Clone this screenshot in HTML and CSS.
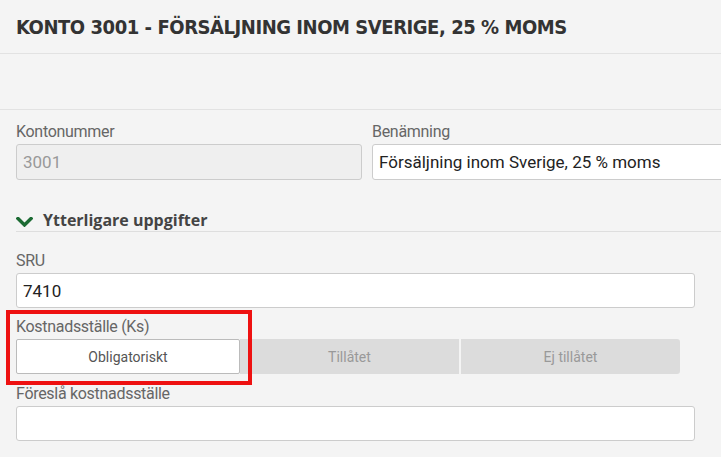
FILE: index.html
```html
<!DOCTYPE html>
<html lang="sv">
<head>
    <meta charset="UTF-8">
    <meta name="viewport" content="width=device-width, initial-scale=1.0">
    <title>Konto 3001</title>
    <link rel="stylesheet" href="styles.css">
</head>
<body>
    <div id="header">
        <h1>KONTO 3001 - FÖRSÄLJNING INOM SVERIGE, 25 % MOMS</h1>
    </div>
    <div id="toolbar"></div>
    <div id="form">
        <div class="row">
            <div class="field field-small">
                <label>Kontonummer</label>
                <input type="text" value="3001" disabled>
            </div>
            <div class="field field-wide">
                <label>Benämning</label>
                <input type="text" value="Försäljning inom Sverige, 25 % moms">
            </div>
        </div>
        <div class="section-title">
            <svg class="chevron" width="17" height="10" viewBox="0 0 17 10">
                <path d="M2 1.5 L8.5 8 L15 1.5" fill="none" stroke="#1c6b33" stroke-width="3.4" stroke-linecap="square"/>
            </svg>
            <span>Ytterligare uppgifter</span>
        </div>
        <div class="field field-sru">
            <label>SRU</label>
            <input type="text" value="7410" class="wide-input">
        </div>
        <div class="field field-ks">
            <label>Kostnadsställe (Ks)</label>
            <div class="segments">
                <button class="segment selected">Obligatoriskt</button>
                <button class="segment middle">Tillåtet</button>
                <button class="segment last">Ej tillåtet</button>
            </div>
            <div class="highlight"></div>
        </div>
        <div class="field field-suggest">
            <label>Föreslå kostnadsställe</label>
            <input type="text" value="" class="wide-input">
        </div>
    </div>
</body>
</html>
```

FILE: styles.css
```css
body {
    margin: 0;
    padding: 0;
    background-color: #f4f4f4;
    font-family: 'Roboto', sans-serif;
    overflow: hidden;
}
#header {
    height: 53px;
    border-bottom: 1px solid #e2e2e2;
    padding: 0 16px;
    display: flex;
    align-items: center;
}
#header h1 {
    margin: 0;
    font-family: 'DejaVu Sans Condensed', 'DejaVu Sans', sans-serif;
    font-weight: bold;
    font-size: 20px;
    color: #333;
    letter-spacing: -0.45px;
    white-space: nowrap;
}
#toolbar {
    height: 55px;
    border-bottom: 1px solid #e2e2e2;
}
#form {
    padding: 12px 0 0 16px;
    width: 679px;
}
.row {
    display: flex;
    gap: 10px;
    width: 730px;
}
.field-small {
    width: 346px;
    flex: none;
}
.field-wide {
    width: 370px;
    flex: none;
}
label {
    display: block;
    font-size: 16px;
    line-height: 20px;
    color: #666;
    letter-spacing: -0.3px;
    margin-bottom: 2px;
}
input {
    display: block;
    width: 100%;
    box-sizing: border-box;
    height: 36px;
    border: 1px solid #ccc;
    border-radius: 3px;
    background-color: #fff;
    padding: 0 6px;
    font-family: 'Roboto', sans-serif;
    font-size: 17px;
    color: #222;
}
input:disabled {
    background-color: #efefef;
    color: #999;
}
.section-title {
    margin-top: 25px;
    height: 21px;
    padding-top: 5px;
    border-bottom: 1px solid #dedede;
    display: flex;
    align-items: flex-start;
    gap: 10px;
    width: 705px;
}
.section-title span {
    font-family: 'Open Sans', sans-serif;
    font-weight: bold;
    font-size: 16px;
    line-height: 21px;
    color: #444;
}
.chevron {
    margin-top: 7px;
}
.field-sru {
    margin-top: 19px;
}
.wide-input {
    height: 35px;
}
.field-ks {
    position: relative;
    margin-top: 9px;
}
.segments {
    display: flex;
    width: 664px;
    height: 35px;
}
.segment {
    font-family: 'Roboto', sans-serif;
    font-size: 14px;
    color: #999;
    background-color: #dcdcdc;
    border: none;
    padding: 0;
    height: 35px;
}
.selected {
    width: 224px;
    background-color: #fff;
    border: 1px solid #bbb;
    border-radius: 2px;
    color: #555;
}
.middle {
    width: 219px;
    margin-right: 2px;
}
.last {
    width: 219px;
    border-radius: 0 3px 3px 0;
}
.highlight {
    position: absolute;
    left: -10px;
    top: -7px;
    width: 238px;
    height: 67px;
    border: 4px solid #ee1111;
}
.field-suggest {
    margin-top: 10px;
}
```
